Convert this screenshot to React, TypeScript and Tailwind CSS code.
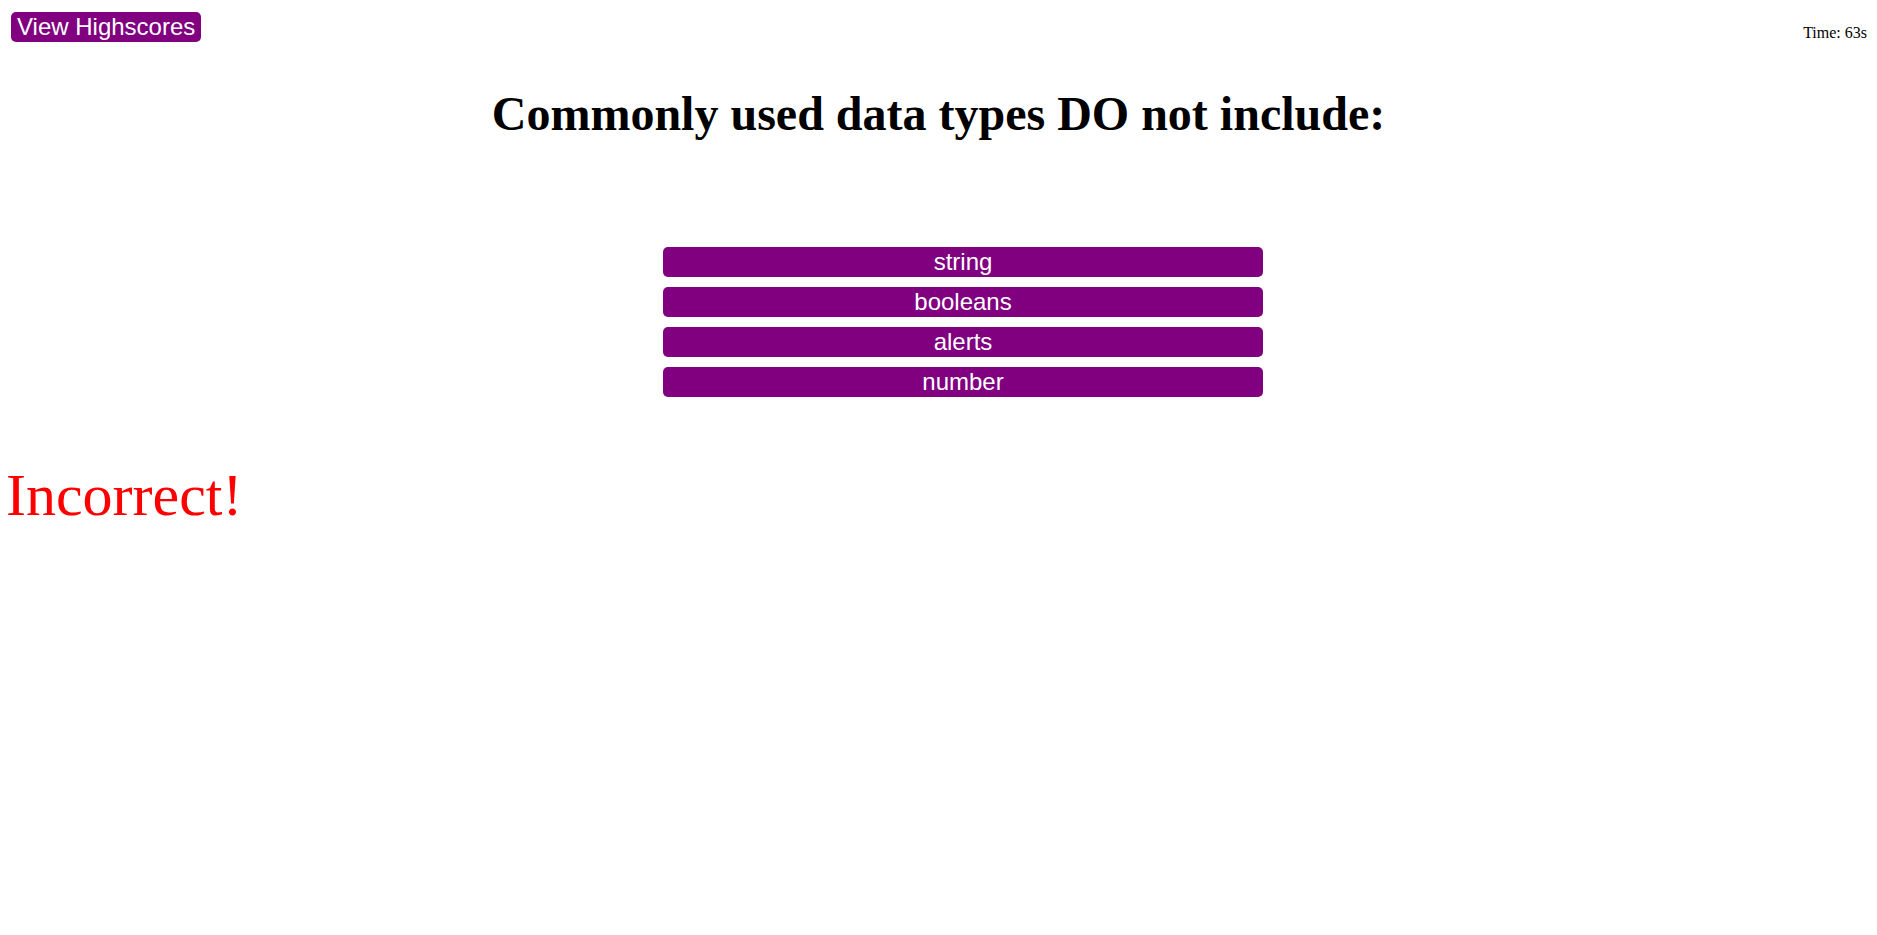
const answers = ["string", "booleans", "alerts", "number"];

export default function App() {
  return (
    <div className="min-h-screen bg-white text-black">
      {/* header row */}
      <div className="flex items-start justify-between">
        <button className="ml-[11px] mt-3 rounded-[5px] bg-[#800080] px-[6px] py-px font-['Liberation_Sans',Arial,sans-serif] text-[24px] leading-[28px] text-white">
          View Highscores
        </button>
        <p className="mr-[10px] mt-[24px] font-['Liberation_Serif','Times_New_Roman',serif] text-[16px] leading-[18px]">
          Time: 63s
        </p>
      </div>

      <h1 className="mt-[45px] text-center font-['Liberation_Serif','Times_New_Roman',serif] text-[48px] font-bold leading-[53px]">
        Commonly used data types DO not include:
      </h1>

      <div className="mt-[107px] flex justify-center pl-[49px]">
        <div className="flex w-[600px] flex-col gap-[10px]">
          {answers.map((a) => (
            <button
              key={a}
              className="rounded-[5px] bg-[#800080] py-px text-center font-['Liberation_Sans',Arial,sans-serif] text-[24px] leading-[28px] text-white"
            >
              {a}
            </button>
          ))}
        </div>
      </div>

      <p className="ml-[6px] mt-[65px] font-['Liberation_Serif','Times_New_Roman',serif] text-[60px] leading-[66px] text-[#ff0000]">
        Incorrect!
      </p>
    </div>
  );
}
